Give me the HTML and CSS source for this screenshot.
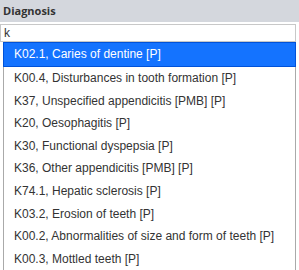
FILE: index.html
```html
<!DOCTYPE html>
<html lang="en">
  <head>
    <meta charset="UTF-8" />
    <meta name="viewport" content="width=device-width, initial-scale=1.0" />
    <title>Diagnosis</title>
    <link rel="stylesheet" href="styles.css">
  </head>
  <body>
    <div class="field">
      <div class="field-label">Diagnosis</div>
      <input class="field-input" type="text" value="k" />
      <ul class="suggest">
        <li class="suggest-item selected">K02.1, Caries of dentine [P]</li>
        <li class="suggest-item">K00.4, Disturbances in tooth formation [P]</li>
        <li class="suggest-item">K37, Unspecified appendicitis [PMB] [P]</li>
        <li class="suggest-item">K20, Oesophagitis [P]</li>
        <li class="suggest-item">K30, Functional dyspepsia [P]</li>
        <li class="suggest-item">K36, Other appendicitis [PMB] [P]</li>
        <li class="suggest-item">K74.1, Hepatic sclerosis [P]</li>
        <li class="suggest-item">K03.2, Erosion of teeth [P]</li>
        <li class="suggest-item">K00.2, Abnormalities of size and form of teeth [P]</li>
        <li class="suggest-item">K00.3, Mottled teeth [P]</li>
      </ul>
    </div>
  </body>
</html>
```

FILE: styles.css
```css
body,
html {
  margin: 0;
  padding: 0;
  background-color: #fff;
  font-family: "Liberation Sans", Arial, sans-serif;
}

.field {
  width: 299px;
}

.field-label {
  height: 22px;
  line-height: 22px;
  padding-left: 3px;
  background-color: #d4d7dd;
  color: #333;
  font-family: "Open Sans", sans-serif;
  font-size: 11px;
  font-weight: 700;
}

.field-input {
  display: block;
  box-sizing: border-box;
  width: 296px;
  height: 18px;
  margin: 2px 0 0 0;
  padding: 0 3px;
  border: 1px solid #c8c8c8;
  font-family: "Liberation Sans", Arial, sans-serif;
  font-size: 12px;
  color: #333;
  outline: none;
}

.suggest {
  list-style: none;
  box-sizing: border-box;
  width: 293px;
  margin: 0 0 0 3px;
  padding: 0;
  border: 1px solid #aaa;
  border-top: none;
}

.suggest-item {
  box-sizing: border-box;
  height: 22.6px;
  line-height: 22px;
  padding-left: 10px;
  font-size: 12px;
  color: #333;
  white-space: nowrap;
}

.suggest-item.selected {
  height: 25px;
  line-height: 23px;
  background-color: #1473ff;
  border: 1px solid #0052d9;
  margin: 0 -1px;
  padding-left: 10px;
  color: #fff;
}
```
